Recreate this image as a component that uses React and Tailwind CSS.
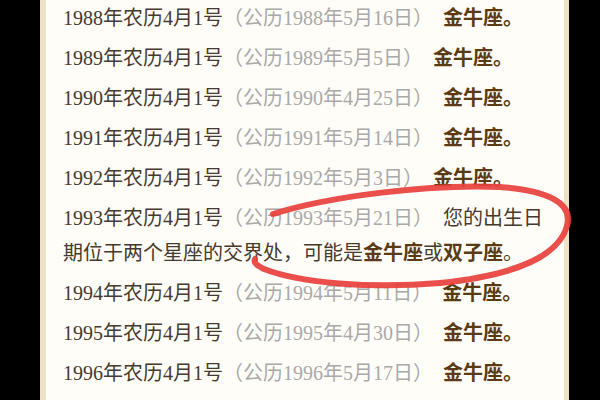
const rows = [
  { year: "1988", solar: "1988年5月16日" },
  { year: "1989", solar: "1989年5月5日" },
  { year: "1990", solar: "1990年4月25日" },
  { year: "1991", solar: "1991年5月14日" },
  { year: "1992", solar: "1992年5月3日" },
  { year: "1993", solar: "1993年5月21日", special: true },
  { year: "1994", solar: "1994年5月11日" },
  { year: "1995", solar: "1995年4月30日" },
  { year: "1996", solar: "1996年5月17日" },
];

const Row = ({ year, solar, special }) => {
  return (
    <p className="mb-[5px] leading-[35px]">
      <span>{year}年农历4月1号</span>
      <span className="text-[#a9a9a9]">（公历{solar}）</span>
      <span>&nbsp;&nbsp;</span>
      {special ? (
        <>
          您的出生日期位于两个星座的交界处，可能是
          <b className="font-bold text-[#5a3a12]">金牛座</b>或
          <b className="font-bold text-[#5a3a12]">双子座</b>。
        </>
      ) : (
        <b className="font-bold text-[#5a3a12]">金牛座。</b>
      )}
    </p>
  );
};

const App = () => {
  return (
    <div className="relative w-[600px] h-[400px] overflow-hidden bg-black flex">
      <div className="ml-[40px] w-[529px] h-full border-l-[6px] border-r-[5px] border-[#ede2c4] bg-[#fffdf8] pt-[1px] pl-[17px] pr-[10px] text-[20px] text-[#46392d] font-['Liberation_Serif','Noto_Sans_CJK_SC',serif]">
        {rows.map((r) => (
          <Row key={r.year} {...r} />
        ))}
      </div>
      <svg className="absolute inset-0 pointer-events-none" width="600" height="400" viewBox="0 0 600 400">
        <path
          d="M 273 214 C 330 196, 430 184, 500 187 C 545 190, 574 202, 567 226 C 558 258, 510 276, 440 283 C 370 289, 300 283, 264 269 C 258 266, 253 263, 255 259"
          fill="none"
          stroke="#e8403c"
          strokeWidth="6"
          strokeLinecap="round"
          strokeLinejoin="round"
          opacity="0.92"
        />
      </svg>
    </div>
  );
};

export default App;
